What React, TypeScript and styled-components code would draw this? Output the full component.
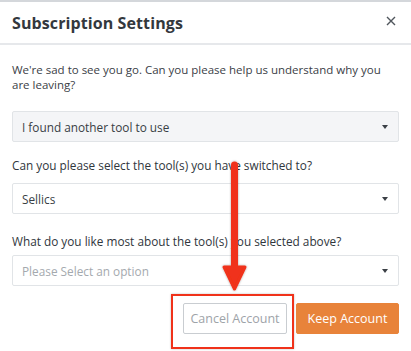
import * as React from 'react';
import styled, { createGlobalStyle } from 'styled-components';

const GlobalStyle = createGlobalStyle`
  html, body {
    margin: 0;
    padding: 0;
    background: #ffffff;
  }
  body {
    font-family: "Open Sans", "Liberation Sans", sans-serif;
    color: #333a40;
  }
`;

const Modal = styled.div`
  position: relative;
  width: 411px;
  height: 351px;
  border-top: 2px solid #d4d7db;
  box-sizing: border-box;
  overflow: hidden;
`;

const Header = styled.div`
  display: flex;
  align-items: center;
  justify-content: space-between;
  height: 41px;
  padding: 0 14px 0 12px;
  border-bottom: 2px solid #e6e8eb;
`;

const Title = styled.h2`
  margin: 0;
  font-size: 16px;
  font-weight: 700;
  color: #33383d;
  letter-spacing: 0.1px;
`;

const Close = styled.button`
  border: 0;
  background: none;
  padding: 0;
  width: 12px;
  height: 12px;
  margin-top: -4px;
  display: flex;
  color: #555b61;
`;

const Body = styled.div`
  padding: 17px 12px 0 12px;
`;

const Intro = styled.p`
  margin: 0 0 19px 0;
  font-size: 11.5px;
  line-height: 15px;
  color: #3a4046;
`;

const Label = styled.div<{ $below?: number }>`
  font-size: 11.8px;
  line-height: 15px;
  color: #30363c;
  margin: 0 0 ${p => p.$below ?? 6}px 0;
`;

const Select = styled.div<{ $filled?: boolean; $below?: number }>`
  display: flex;
  align-items: center;
  justify-content: space-between;
  height: 31px;
  box-sizing: border-box;
  padding: 0 10px 0 9px;
  border: 1px solid #e1e4e7;
  border-radius: 2px;
  background: ${p => (p.$filled ? '#f4f5f7' : '#ffffff')};
  margin-bottom: ${p => p.$below ?? 20}px;
  font-size: 11.8px;
`;

const Value = styled.span<{ $placeholder?: boolean }>`
  color: ${p => (p.$placeholder ? '#a4a9ae' : '#383e44')};
`;

const Caret = styled.span`
  width: 0;
  height: 0;
  border-left: 3.5px solid transparent;
  border-right: 3.5px solid transparent;
  border-top: 4px solid #3b4046;
`;

const Actions = styled.div`
  display: flex;
  justify-content: flex-end;
  gap: 9px;
`;

const Button = styled.button<{ $primary?: boolean }>`
  width: ${p => (p.$primary ? '103px' : '104px')};
  height: 31px;
  box-sizing: border-box;
  padding: 0;
  border-radius: 2px;
  font-family: inherit;
  font-size: 12.5px;
  border: 1px solid ${p => (p.$primary ? '#e8833a' : '#c9cdd1')};
  background: ${p => (p.$primary ? '#e8833a' : '#ffffff')};
  color: ${p => (p.$primary ? '#ffffff' : '#9ea3a8')};
`;

const Highlight = styled.div`
  position: absolute;
  left: 171px;
  top: 292px;
  width: 123px;
  height: 55px;
  box-sizing: border-box;
  border: 2.5px solid #f0321a;
  box-shadow: 0 0 2px rgba(0, 0, 0, 0.25);
  pointer-events: none;
`;

const Arrow = styled.svg`
  position: absolute;
  left: 221px;
  top: 159px;
  pointer-events: none;
  overflow: visible;
`;

const Sel = ({
  value,
  filled,
  placeholder,
  below,
}: {
  value: string;
  filled?: boolean;
  placeholder?: boolean;
  below?: number;
}) => (
  <Select $filled={filled} $below={below}>
    <Value $placeholder={placeholder}>{value}</Value>
    <Caret />
  </Select>
);

const App = () => {
  return (
    <>
      <GlobalStyle />
      <Modal>
        <Header>
          <Title>Subscription Settings</Title>
          <Close aria-label="close">
            <svg width="12" height="12" viewBox="0 0 12 12">
              <path d="M2 2 L10 10 M10 2 L2 10" stroke="#50565c" strokeWidth="1.4" />
            </svg>
          </Close>
        </Header>
        <Body>
          <Intro>We're sad to see you go. Can you please help us understand why you are leaving?</Intro>
          <Sel value="I found another tool to use" filled below={16} />
          <Label $below={10}>Can you please select the tool(s) you have switched to?</Label>
          <Sel value="Sellics" below={20} />
          <Label $below={6}>What do you like most about the tool(s) you selected above?</Label>
          <Sel value="Please Select an option" placeholder below={17} />
          <Actions>
            <Button>Cancel Account</Button>
            <Button $primary>Keep Account</Button>
          </Actions>
        </Body>
        <Highlight />
        <Arrow width="28" height="135" viewBox="0 0 28 135">
          <defs>
            <filter id="sh" x="-50%" y="-10%" width="200%" height="120%">
              <feDropShadow dx="0" dy="0" stdDeviation="1" floodColor="#000" floodOpacity="0.35" />
            </filter>
          </defs>
          <g filter="url(#sh)">
            <path d="M13.5 4 L13.5 112" stroke="#f0321a" strokeWidth="7" strokeLinecap="round" />
            <path d="M3 106 L13.5 128 L24 106 Z" fill="#f0321a" stroke="#f0321a" strokeWidth="3" strokeLinejoin="round" />
          </g>
        </Arrow>
      </Modal>
    </>
  );
};

export default App;
